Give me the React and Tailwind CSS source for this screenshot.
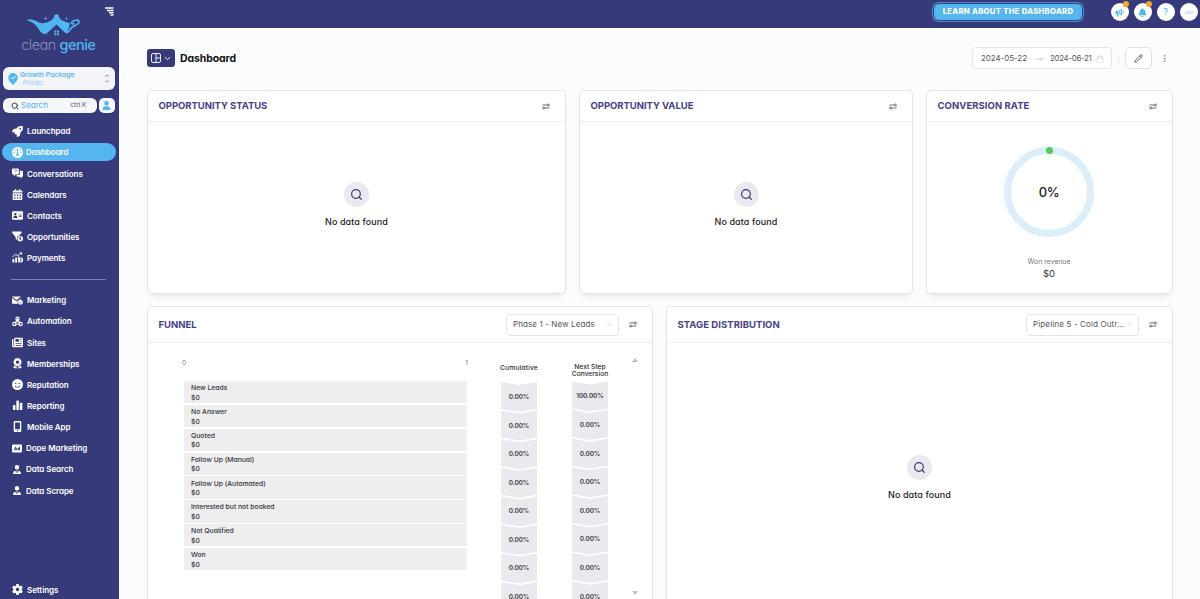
import React from 'react';
import {
  FaRocket,
  FaGauge,
  FaCalendarDays,
  FaAddressCard,
  FaFilterCircleDollar,
  FaNewspaper,
  FaAward,
  FaFaceSmile,
  FaMobileScreenButton,
  FaRectangleAd,
  FaUserTie,
  FaUser,
  FaGear,
  FaBell,
} from 'react-icons/fa6';
import { ChevronDown, ChevronUp, Search, Calendar, MoveRight, Pencil, EllipsisVertical } from 'lucide-react';

const ChatIcon = ({ className }) => (
  <svg viewBox="0 0 24 22" className={className} fill="currentColor">
    <path d="M2 0h11a2 2 0 0 1 2 2v9a2 2 0 0 1-2 2H8l-4 4v-4H2a2 2 0 0 1-2-2V2a2 2 0 0 1 2-2z" />
    <path d="M17 5h5a2 2 0 0 1 2 2v9a2 2 0 0 1-2 2h-1v4l-4-4h-5a2 2 0 0 1-2-2v-1.500h5a2 2 0 0 0 2-2z" />
    <path d="M5.500 5c0-3 4.500-3 4.500-.5 0 1.700-2.200 1.700-2.200 3.500M7.800 10v1" stroke="#373a7a" strokeWidth="1.300" fill="none" />
  </svg>
);

const PaymentsIcon = ({ className }) => (
  <svg viewBox="0 0 24 22" className={className} fill="currentColor">
    <path d="M1 14h4v8H1zM7 11h4v11H7zM13 9h3v3a6 6 0 0 0-1 8v2h-2z" />
    <path d="M1 10l7-6 5 3 6-5" stroke="currentColor" strokeWidth="2" fill="none" />
    <path d="M16 0h6v6z" />
    <circle cx="19" cy="16.500" r="5.500" />
    <path d="M21 14.500c-1-1.500-4-1-3.500.7.400 1.400 3.300.8 3.500 2.200.2 1.600-2.800 2-3.800.6M19.200 12.500v8" stroke="#373a7a" strokeWidth="1" fill="none" />
  </svg>
);

const MarketingIcon = ({ className }) => (
  <svg viewBox="0 0 24 20" className={className} fill="currentColor">
    <path d="M1 1h18v1L10 9 0 2zM0 4.500l10 7 9-6.500v3a6 6 0 0 0-6 9H1.500A1.500 1.500 0 0 1 0 15.500z" />
    <circle cx="18.500" cy="14" r="5.300" />
    <path d="M16 14l2 2 3.200-3.500" stroke="#373a7a" strokeWidth="1.300" fill="none" />
  </svg>
);

const AutomationIcon = ({ className }) => (
  <svg viewBox="0 0 24 22" className={className} fill="none" stroke="currentColor" strokeWidth="2.300">
    <circle cx="12" cy="5" r="3.600" />
    <circle cx="5" cy="16.500" r="3.600" />
    <circle cx="19" cy="16.500" r="3.600" />
    <path d="M12 5l-5 9M12 5l5 9M6 17h12M9 12h6" />
  </svg>
);

const ReportingIcon = ({ className }) => (
  <svg viewBox="0 0 24 24" className={className} fill="currentColor">
    <rect x="2" y="11" width="5.500" height="11" rx="1.500" />
    <rect x="9.500" y="1" width="5.500" height="21" rx="1.500" />
    <rect x="17" y="6" width="5.500" height="16" rx="1.500" />
  </svg>
);

const MegaphoneIcon = ({ className }) => (
  <svg viewBox="0 0 20 20" className={className} fill="currentColor">
    <path d="M1 6h6v7H1zM8 6l8-4v15l-8-4zM3 13h4l1 6H5z" />
    <path d="M10 8l4-2v7l-4-2z" fill="#fff" />
    <rect x="17.500" y="7" width="2" height="5" />
  </svg>
);

const SettingsSwap = () => (
  <svg viewBox="0 0 16 14" className="h-[7px] w-[8px] text-gray-700" fill="none" stroke="currentColor" strokeWidth="1.500">
    <path d="M1 4h9.500M5.500 10H15" />
    <circle cx="12.800" cy="4" r="2" />
    <circle cx="3.200" cy="10" r="2" />
  </svg>
);

const mainLinks = [
  { label: 'Launchpad', icon: FaRocket },
  { label: 'Dashboard', icon: FaGauge, active: true },
  { label: 'Conversations', icon: ChatIcon },
  { label: 'Calendars', icon: FaCalendarDays },
  { label: 'Contacts', icon: FaAddressCard },
  { label: 'Opportunities', icon: FaFilterCircleDollar },
  { label: 'Payments', icon: PaymentsIcon },
];

const moreLinks = [
  { label: 'Marketing', icon: MarketingIcon },
  { label: 'Automation', icon: AutomationIcon },
  { label: 'Sites', icon: FaNewspaper },
  { label: 'Memberships', icon: FaAward },
  { label: 'Reputation', icon: FaFaceSmile },
  { label: 'Reporting', icon: ReportingIcon },
  { label: 'Mobile App', icon: FaMobileScreenButton },
  { label: 'Dope Marketing', icon: FaRectangleAd, small: true },
  { label: 'Data Search', icon: FaUserTie, small: true },
  { label: 'Data Scrape', icon: FaUserTie, small: true },
];

const stages = [
  'New Leads',
  'No Answer',
  'Quoted',
  'Follow Up (Manual)',
  'Follow Up (Automated)',
  'Interested but not booked',
  'Not Qualified',
  'Won',
];

const cumulative = ['0.00%', '0.00%', '0.00%', '0.00%', '0.00%', '0.00%', '0.00%', '0.00%'];
const nextStep = ['100.00%', '0.00%', '0.00%', '0.00%', '0.00%', '0.00%', '0.00%', '0.00%'];

const NavItem = ({ label, icon: Icon, active, small }) => (
  <div className="ml-[2px] flex h-[21.15px] w-[113.500px] items-center text-[8px] font-semibold tracking-[-0.05px] whitespace-nowrap text-white">
    <div className={`flex h-[18.500px] w-full items-center rounded-full pl-[9.500px] ${active ? 'bg-[#55b5ef]' : ''}`}>
      <div className="flex w-[11px] shrink-0 justify-center">
        <Icon className={small ? 'h-[9px] w-[10px]' : 'h-[11px] w-[11px]'} />
      </div>
      <span className={`pt-[0.5px] ${active || small ? 'ml-[3.500px]' : 'ml-[4.500px]'}`}>{label}</span>
    </div>
  </div>
);

const Logo = () => (
  <div className="flex h-[54px] flex-col items-center pt-[14px]">
    <svg viewBox="0 0 54 23" className="ml-[-10px] h-[23px] w-[54px] shrink-0" fill="#50b6f0">
      {/* lamp: spout, body and domed lid, open below the roof */}
      <path d="M.5 5.500C4 5 7 6 11 8c4 1.800 7 1.500 11-.5l3-1.500c1-2.500 2.500-3 4.500-3s3.500.5 4.500 3l4 1.500c2 .8 3.500 1.500 5 1.200L42 14l-3 6-9.500-9.500L19 20.500c-4-.5-6-3-8-6.500C9 11 5 7.500.5 6.500z" />
      <circle cx="29.500" cy="2.800" r="2.500" />
      <path d="M39.500 19c4-1.500 3.500-5 6.500-6.500 3.500-1.500 6.500-2.500 6-5-.5-2-5-1.500-7 .5-1 1.500.5 2.500 2.500 1.500" fill="none" stroke="#50b6f0" strokeWidth="1.700" />
      <path d="M15 23l14.500-11.500L43 23z" fill="#373a7a" />
      <path d="M27.300 16.500h2v2h-2zM30 16.500h2v2h-2zM27.300 19.200h2v2h-2zM30 19.200h2v2h-2z" />
      <path d="M18.500 3v3M17 4.500h3M39.500 3.500v2.500M38.200 4.700h2.500" stroke="#50b6f0" strokeWidth=".7" />
    </svg>
    <div className="mt-[-1px] ml-[-2px] text-[14.500px] leading-[18px] font-light tracking-[-0.5px] whitespace-nowrap text-[#8a8db8]">
      clean <span className="font-medium text-[#50b6f0]">genie</span>
    </div>
  </div>
);

const Sidebar = () => (
  <aside className="flex h-full w-[118.500px] shrink-0 flex-col bg-[#373a7a]">
    <div className="relative h-[67px]">
      <Logo />
      <svg viewBox="0 0 18 18" className="absolute top-[7px] left-[105px] h-[9px] w-[9px]" stroke="#fff" strokeWidth="2.600">
        <path d="M0 2h17M4 7h13M8 11.500h9M11 16h6" />
      </svg>
    </div>

    {/* Account switcher */}
    <div className="ml-[2.500px] flex h-[23px] w-[112px] items-center rounded-[6px] bg-[#f3f4f8] pr-[5px] pl-[5px]">
      <svg viewBox="0 0 20 24" className="h-[12px] w-[10px] shrink-0">
        <path d="M10 0a9.500 9.500 0 0 1 9.500 9.500C19.500 16 10 24 10 24S.5 16 .5 9.500A9.500 9.500 0 0 1 10 0z" fill="#50b6f0" />
        <path d="M6 9l3 3 6-6" stroke="#fff" strokeWidth="2" fill="none" />
      </svg>
      <div className="ml-[2.500px] flex-1 leading-[8px] whitespace-nowrap text-[#5dbaf0]">
        <div className="text-[6.800px] font-semibold">Growth Package</div>
        <div className="pl-[3px] text-[6px] leading-[7px] opacity-70">Florida</div>
      </div>
      <div className="flex flex-col gap-[1px] text-gray-700">
        <ChevronUp className="h-[5px] w-[6px]" strokeWidth={3} />
        <ChevronDown className="h-[5px] w-[6px]" strokeWidth={3} />
      </div>
    </div>

    <div className="mt-[8px] ml-[2.500px] flex gap-[2px]">
      <div className="flex h-[15px] w-[94px] items-center rounded-[6px] bg-[#f6f7fa] px-[8px]">
        <Search className="h-[8px] w-[8px] text-gray-700" strokeWidth={3} />
        <span className="ml-[2.500px] text-[8px] leading-[15px] text-[#50b6f0]">Search</span>
        <span className="ml-auto pt-[0.5px] pr-[2px] text-[6.500px] leading-[15px] whitespace-nowrap text-gray-600">ctrl K</span>
      </div>
      <div className="flex h-[15px] w-[16px] items-center justify-center rounded-[5px] bg-[#f6f7fa]">
        <FaUser className="h-[9px] w-[9px] text-[#50b6f0]" />
      </div>
    </div>

    <nav className="mt-[7.500px]">
      {mainLinks.map((item) => (
        <NavItem key={item.label} {...item} />
      ))}
      <div className="mt-[10.500px] mb-[9px] ml-[11px] h-[1.500px] w-[95px] bg-[#7f82ae]" />
      {moreLinks.map((item) => (
        <NavItem key={item.label} {...item} />
      ))}
    </nav>
    <div className="mt-auto mb-[-1px]">
      <NavItem label="Settings" icon={FaGear} />
    </div>
  </aside>
);

const TopBar = () => (
  <header className="flex h-[28px] shrink-0 items-start justify-end bg-[#373a7a] pt-[3px] pr-[2.500px]">
    <div className="mr-[27.500px] flex h-[18px] w-[150px] items-center justify-center rounded-[6px] border border-[#373a7a] bg-[#55b5ef] text-[7.700px] font-extrabold tracking-[0.29px] whitespace-nowrap text-white ring-1 ring-[#4b8fcb]">
      LEARN ABOUT THE DASHBOARD
    </div>
    <div className="flex gap-[5px] text-[#50b6f0]">
      <div className="relative flex h-[18px] w-[18px] items-center justify-center rounded-full bg-white">
        <MegaphoneIcon className="h-[9px] w-[9px]" />
        <span className="absolute -top-[2px] right-0 h-[6px] w-[6px] rounded-full bg-[#f5a623]" />
      </div>
      <div className="relative flex h-[18px] w-[18px] items-center justify-center rounded-full bg-white">
        <FaBell className="h-[9px] w-[9px]" />
        <span className="absolute -top-[2px] right-0 h-[6px] w-[6px] rounded-full bg-[#f5a623]" />
      </div>
      <div className="flex h-[18px] w-[18px] items-center justify-center rounded-full bg-white text-[9px] font-medium">?</div>
      <div className="flex h-[18px] w-[18px] items-center justify-center rounded-full bg-white">
        <svg viewBox="0 0 16 6" className="h-[4px] w-[10px]" fill="none" stroke="#7cc6f2">
          <path d="M2 3l4 0 2-2 2 2h4" />
          <path d="M2 5h12" stroke="#b8bace" />
        </svg>
      </div>
    </div>
  </header>
);

const Card = ({ title, titleClass, tall, className, select, selectClass, children }) => (
  <section className={`flex flex-col rounded-[5px] border border-[#e1e4ea] bg-white shadow-[0_5px_7px_-4px_rgba(0,0,0,0.12)] ${className}`}>
    <div
      className={`flex shrink-0 items-center border-b border-[#eceef2] pr-[15.500px] pl-[10.500px] ${tall ? 'h-[36px]' : 'h-[31px]'}`}
    >
      <h2 className={`text-[9.500px] font-bold whitespace-nowrap text-[#45418a] ${tall ? 'pt-px' : ''} ${titleClass || ''}`}>{title}</h2>
      <div className="ml-auto flex items-center">
        {select && (
          <div className="mr-[9.500px] flex h-[22px] w-[113px] items-center rounded-[4px] border border-[#e3e5ea] pr-[5px] pl-[6px] text-[8px] text-[#50535c]">
            <span className={`pb-px whitespace-nowrap ${selectClass}`}>{select}</span>
            <ChevronDown className="ml-auto h-[7px] w-[7px] shrink-0 text-gray-400" strokeWidth={1.5} />
          </div>
        )}
        <SettingsSwap />
      </div>
    </div>
    {children}
  </section>
);

const NoData = ({ className }) => (
  <div className={`flex flex-col items-center ${className}`}>
    <div className="flex h-[25px] w-[25px] items-center justify-center rounded-full bg-[#e9e9ef]">
      <Search className="h-[13px] w-[13px] text-[#39366f]" strokeWidth={2.2} />
    </div>
    <p className="mt-[9px] text-[9px] leading-[12px] font-medium tracking-[0.1px] text-[#1d1d22]">No data found</p>
  </div>
);

const Steps = ({ values, className }) => (
  <div className={`w-[36px] shrink-0 ${className || ''}`}>
    {values.map((value, i) => (
      <div
        key={i}
        className="mb-[-1.500px] flex h-[30.100px] items-center justify-center bg-[#e8eaee] pt-[1.500px] text-[6.500px] font-semibold tracking-[-0.1px] text-[#383b45] [clip-path:polygon(0_0,50%_3px,100%_0,100%_27px,50%_30px,0_27px)]"
      >
        {value}
      </div>
    ))}
  </div>
);

const App = () => (
  <div className="flex h-[599px] w-[1200px] overflow-hidden bg-[#fafcfd] font-['Inter',sans-serif] [font-feature-settings:'cv11']">
    <Sidebar />
    <div className="flex min-w-0 flex-1 flex-col">
      <TopBar />
      <main className="flex min-h-0 flex-1 flex-col overflow-hidden pr-[27px] pl-[28.500px]">
        <div className="mt-[18.500px] flex h-[23px] shrink-0 items-center">
          <div className="flex h-[18px] w-[28px] items-center justify-center gap-[2px] rounded-[3px] bg-[#373a7a] text-white">
            <svg viewBox="0 0 20 20" className="h-[10px] w-[10px]" fill="none" stroke="currentColor" strokeWidth="1.800">
              <rect x="1" y="1" width="18" height="18" rx="3" />
              <path d="M10 1v18M10 10h9" />
            </svg>
            <ChevronDown className="h-[9px] w-[9px]" strokeWidth={2.5} />
          </div>
          <h1 className="ml-[5px] pt-px text-[10.500px] font-bold tracking-[-0.1px] text-[#111]">Dashboard</h1>
          <div className="ml-auto flex h-[22px] w-[140px] items-center rounded-[4px] border border-[#e3e5ea] bg-white pt-px pl-[8px] text-[7.900px] text-[#55575f]">
            <span className="w-[46px] whitespace-nowrap">2024-05-22</span>
            <MoveRight className="ml-[8px] h-[8px] w-[8px] text-gray-400" strokeWidth={1.5} />
            <span className="ml-[7px] tracking-[-0.3px] whitespace-nowrap">2024-06-21</span>
            <Calendar className="mr-[7px] ml-auto h-[8px] w-[8px] shrink-0 text-gray-300" />
          </div>
          <div className="ml-[6px] h-[12px] w-px bg-[#eceef1]" />
          <div className="ml-[5.500px] flex h-[22px] w-[27px] items-center justify-center rounded-[5px] border border-[#dfe1e7] bg-white">
            <Pencil className="h-[9px] w-[9px] text-gray-700" />
          </div>
          <EllipsisVertical className="mr-[4.500px] ml-[8px] h-[9px] w-[9px] text-gray-500" strokeWidth={1.7} />
        </div>

        <div className="mt-[20.500px] flex shrink-0 gap-[13px]">
          <Card title="OPPORTUNITY STATUS" titleClass="tracking-[-0.04px]" className="h-[204px] w-[419px]">
            <NoData className="mt-[60px]" />
          </Card>
          <Card title="OPPORTUNITY VALUE" titleClass="tracking-[-0.04px]" className="h-[204px] w-[334px]">
            <NoData className="mt-[60px]" />
          </Card>
          <Card title="CONVERSION RATE" titleClass="tracking-[0.060px]" className="h-[204px] w-[247px]">
            <div className="flex flex-col items-center pr-px">
              <div className="relative mt-[25px] flex h-[90px] w-[90px] items-center justify-center rounded-full border-[7px] border-[#dceefa]">
                <span className="pt-px text-[13px] font-medium tracking-[-0.5px] text-[#202024]">0%</span>
                <span className="absolute -top-[7px] left-[34.500px] h-[7px] w-[7px] rounded-full bg-[#52cb5a]" />
              </div>
              <div className="mt-[19.500px] text-[6.900px] leading-[10px] text-[#74767e]">Won revenue</div>
              <div className="text-[9.500px] leading-[13px] text-[#35363c]">$0</div>
            </div>
          </Card>
        </div>

        <div className="mt-[12px] flex shrink-0 gap-[13px]">
          <Card title="FUNNEL" tall select="Phase 1 - New Leads" selectClass="tracking-[0.100px]" className="h-[320px] w-[506px]">
            <div className="flex min-h-0 flex-1 overflow-hidden pl-[36px]">
              <div className="w-[283px] shrink-0 pt-[15px]">
                <div className="mb-[13px] flex h-[10px] items-center justify-between pt-px text-[6.500px] text-[#777980]">
                  <span className="ml-[-2px]">0</span>
                  <span className="mr-[-1px]">1</span>
                </div>
                {stages.map((stage) => (
                  <div
                    key={stage}
                    className="mb-[1.500px] h-[22.350px] bg-[#eeeeef] pt-[2.200px] pl-[7px] text-[6.800px] leading-[9.500px] font-medium text-[#303238]"
                  >
                    <div>{stage}</div>
                    <div>$0</div>
                  </div>
                ))}
              </div>
              <div className="ml-[28px] flex w-[48px] shrink-0 flex-col items-center text-[6.800px] font-medium text-[#2c2e35]">
                <div className="flex h-[39px] shrink-0 items-end pb-[10px] leading-[9px] tracking-[0.1px]">Cumulative</div>
                <Steps values={cumulative} />
              </div>
              <div className="ml-[23px] flex w-[48px] shrink-0 flex-col items-center text-center text-[6.700px] font-medium text-[#2c2e35]">
                <div className="flex h-[38.500px] shrink-0 flex-col justify-end pb-[4px] leading-[7px]">
                  <span>Next Step</span>
                  <span>Conversion</span>
                </div>
                <Steps values={nextStep} />
              </div>
              <div className="ml-[18px] flex h-[239px] flex-col justify-between pt-[15px] text-gray-400">
                <svg viewBox="0 0 6 4" className="h-[4px] w-[6px]" fill="#bfc1c6">
                  <path d="M3 0l3 4H0z" />
                </svg>
                <svg viewBox="0 0 6 4" className="mb-[-13px] h-[4px] w-[6px]" fill="#bfc1c6">
                  <path d="M3 4l3-4H0z" />
                </svg>
              </div>
            </div>
          </Card>
          <Card
            title="STAGE DISTRIBUTION"
            titleClass="tracking-[0.050px]"
            tall
            select="Pipeline 5 - Cold Outr..."
            selectClass="tracking-[0.140px]"
            className="h-[320px] w-[507px]"
          >
            <NoData className="mt-[112px]" />
          </Card>
        </div>
      </main>
    </div>
  </div>
);

export default App;
